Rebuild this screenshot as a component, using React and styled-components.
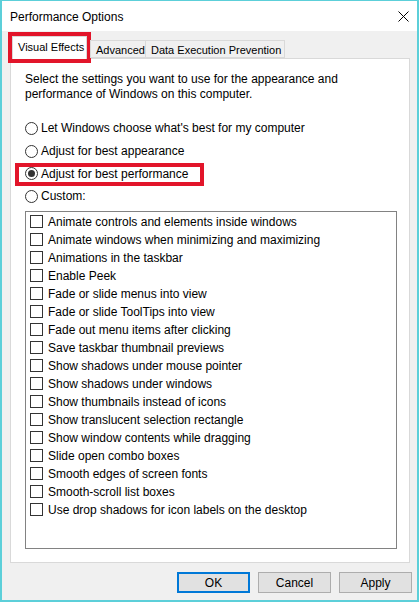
import React from 'react';
import styled, { createGlobalStyle } from 'styled-components';

const GlobalStyle = createGlobalStyle`
  html, body {
    margin: 0;
    padding: 0;
    background: #fff;
  }
  * {
    box-sizing: border-box;
  }
`;

const effects = [
  'Animate controls and elements inside windows',
  'Animate windows when minimizing and maximizing',
  'Animations in the taskbar',
  'Enable Peek',
  'Fade or slide menus into view',
  'Fade or slide ToolTips into view',
  'Fade out menu items after clicking',
  'Save taskbar thumbnail previews',
  'Show shadows under mouse pointer',
  'Show shadows under windows',
  'Show thumbnails instead of icons',
  'Show translucent selection rectangle',
  'Show window contents while dragging',
  'Slide open combo boxes',
  'Smooth edges of screen fonts',
  'Smooth-scroll list boxes',
  'Use drop shadows for icon labels on the desktop',
];

const options = [
  { label: "Let Windows choose what's best for my computer" },
  { label: 'Adjust for best appearance' },
  { label: 'Adjust for best performance', checked: true, marked: true },
  { label: 'Custom:' },
];

const tabs = [
  { label: 'Visual Effects', width: 75, active: true },
  { label: 'Advanced', width: 56 },
  { label: 'Data Execution Prevention', width: 139 },
];

const App = () => {
  return (
    <>
      <GlobalStyle />
      <Window>
        <TitleBar>
          <Title>Performance Options</Title>
          <CloseButton>
            <svg width='11' height='11' viewBox='0 0 11 11'>
              <path d='M0.5 0.5 L10.5 10.5 M10.5 0.5 L0.5 10.5' stroke='#000' strokeWidth='1' />
            </svg>
          </CloseButton>
        </TitleBar>
        <Body>
          <TabStrip>
            {tabs.map((t) => (
              <Tab key={t.label} active={t.active} $w={t.width}>
                {t.label}
              </Tab>
            ))}
          </TabStrip>
          <Panel>
            <Intro>
              Select the settings you want to use for the appearance and
              <br />
              performance of Windows on this computer.
            </Intro>
            <RadioGroup>
              {options.map((o) => (
                <RadioRow key={o.label} marked={o.marked}>
                  <Radio checked={o.checked} />
                  <span>{o.label}</span>
                </RadioRow>
              ))}
            </RadioGroup>
            <ListBox>
              {effects.map((e) => (
                <CheckRow key={e}>
                  <Checkbox />
                  <span>{e}</span>
                </CheckRow>
              ))}
            </ListBox>
          </Panel>
          <ButtonRow>
            <Button primary>OK</Button>
            <Button>Cancel</Button>
            <Button>Apply</Button>
          </ButtonRow>
        </Body>
      </Window>
    </>
  );
};

export default App;

const Window = styled.div`
  width: 419px;
  height: 602px;
  display: flex;
  flex-direction: column;
  border: 2px solid #5ccfd9;
  border-top-width: 1px;
  background: #f0f0f0;
  font-family: 'Liberation Sans', Arial, sans-serif;
  font-size: 12px;
  color: #000;
`;

const TitleBar = styled.div`
  height: 30px;
  flex-shrink: 0;
  background: #fff;
  display: flex;
  align-items: center;
  justify-content: space-between;
  padding: 0 8px 0 8px;
`;

const Title = styled.span`
  font-size: 12px;
  margin-top: 1px;
`;

const CloseButton = styled.span`
  display: flex;
  width: 11px;
  height: 11px;
`;

const Body = styled.div`
  flex: 1;
  display: flex;
  flex-direction: column;
  padding: 0 7px 7px 6px;
`;

const TabStrip = styled.div`
  height: 27px;
  display: flex;
  align-items: flex-end;
  padding-left: 4px;
  position: relative;
  z-index: 1;
`;

const Tab = styled.div`
  width: ${(p) => p.$w}px;
  height: ${(p) => (p.active ? '23px' : '18px')};
  margin-bottom: ${(p) => (p.active ? '-1px' : '0')};
  margin-right: ${(p) => (p.active ? '3px' : '0')};
  padding: ${(p) => (p.active ? '0 0 3px 5px' : '1px 0 0 5px')};
  display: flex;
  align-items: center;
  font-size: 11px;
  background: ${(p) => (p.active ? '#fff' : '#f0f0f0')};
  border: 1px solid #d9d9d9;
  border-bottom: ${(p) => (p.active ? 'none' : '1px solid #d9d9d9')};
  border-left-width: ${(p) => (p.active ? '1px' : '0')};
  outline: ${(p) => (p.active ? '4px solid #e2152a' : 'none')};
  white-space: nowrap;
  &:nth-child(2) {
    border-left-width: 1px;
  }
`;

const Panel = styled.div`
  height: 505px;
  margin-left: 2px;
  background: #fff;
  border: 1px solid #d9d9d9;
  padding: 13px 12px 0 14px;
  display: flex;
  flex-direction: column;
`;

const Intro = styled.p`
  margin: 0;
  line-height: 15px;
`;

const RadioGroup = styled.div`
  margin-top: 15px;
  display: flex;
  flex-direction: column;
`;

const RadioRow = styled.label`
  height: 22.7px;
  display: flex;
  align-items: center;
  gap: 3px;
  align-self: flex-start;
  position: relative;
  &::after {
    content: '';
    display: ${(p) => (p.marked ? 'block' : 'none')};
    position: absolute;
    left: -10px;
    right: -16px;
    top: 1px;
    bottom: -1px;
    border: 4px solid #e2152a;
  }
`;

const Radio = styled.span`
  width: 13px;
  height: 13px;
  border-radius: 50%;
  border: 1px solid #333;
  background: #fff;
  display: flex;
  align-items: center;
  justify-content: center;
  flex-shrink: 0;
  &::before {
    content: '';
    display: ${(p) => (p.checked ? 'block' : 'none')};
    width: 7px;
    height: 7px;
    border-radius: 50%;
    background: #333;
  }
`;

const ListBox = styled.div`
  margin-top: 3px;
  height: 338px;
  border: 1px solid #828282;
  padding: 1px 4px 0 4px;
  display: flex;
  flex-direction: column;
`;

const CheckRow = styled.label`
  height: 18px;
  display: flex;
  align-items: center;
  gap: 5px;
`;

const Checkbox = styled.span`
  width: 13px;
  height: 13px;
  border: 1px solid #333;
  background: #fff;
  flex-shrink: 0;
`;

const ButtonRow = styled.div`
  margin-top: 9px;
  margin-right: -2px;
  display: flex;
  justify-content: flex-end;
  gap: 8px;
`;

const Button = styled.button`
  width: 73px;
  height: 21px;
  font-family: inherit;
  font-size: 12px;
  color: #000;
  background: #e1e1e1;
  border: ${(p) => (p.primary ? '2px solid #0078d7' : '1px solid #adadad')};
  padding: 0;
`;
